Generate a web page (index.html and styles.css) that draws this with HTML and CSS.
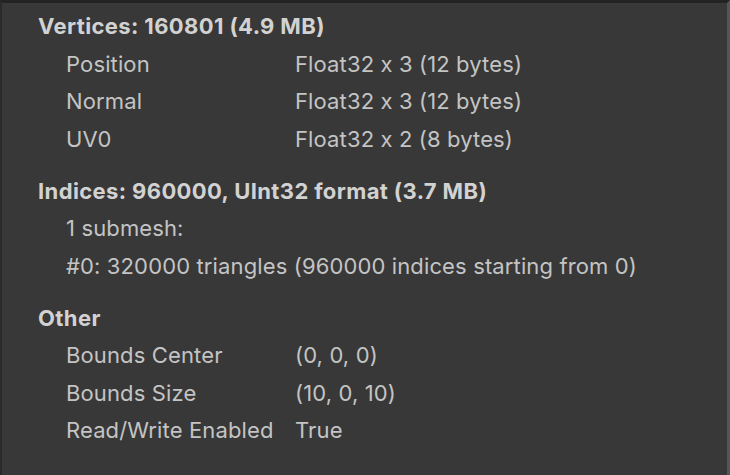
FILE: index.html
```html
<!DOCTYPE html>
<html>
<head>
<meta charset="utf-8">
<link rel="stylesheet" href="styles.css">
</head>
<body>
<div class="panel">
  <section class="section">
    <div class="header">Vertices: 160801 (4.9 MB)</div>
    <div class="grid">
      <div class="label">Position</div><div class="value">Float32 x 3 (12 bytes)</div>
      <div class="label">Normal</div><div class="value">Float32 x 3 (12 bytes)</div>
      <div class="label">UV0</div><div class="value">Float32 x 2 (8 bytes)</div>
    </div>
  </section>
  <section class="section">
    <div class="header">Indices: 960000, UInt32 format (3.7 MB)</div>
    <div class="line">1 submesh:</div>
    <div class="line">#0: 320000 triangles (960000 indices starting from 0)</div>
  </section>
  <section class="section">
    <div class="header">Other</div>
    <div class="grid">
      <div class="label">Bounds Center</div><div class="value">(0, 0, 0)</div>
      <div class="label">Bounds Size</div><div class="value">(10, 0, 10)</div>
      <div class="label">Read/Write Enabled</div><div class="value">True</div>
    </div>
  </section>
</div>
</body>
</html>
```
FILE: styles.css
```css
html, body {
  margin: 0;
  padding: 0;
  background: #383838;
}
body {
  width: 730px;
  height: 475px;
  overflow: hidden;
  font-family: Inter, "Noto Sans", sans-serif;
  font-size: 22px;
  font-feature-settings: "calt" 0;
  color: #c4c4c4;
}
.panel {
  box-sizing: border-box;
  height: 475px;
  width: 730px;
  border-top: 3px solid #232323;
  border-left: 2px solid #2a2a2a;
  border-right: 3px solid #555555;
  padding: 5px 0 0 36px;
  display: flex;
  flex-direction: column;
  gap: 14.5px;
}
.section {
  display: flex;
  flex-direction: column;
}
.header {
  font-weight: 700;
  color: #d2d2d2;
  line-height: 37.5px;
  letter-spacing: 0.38px;
}
.grid {
  display: grid;
  grid-template-columns: 229px 1fr;
  padding-left: 28px;
}
.label, .value, .line {
  line-height: 37.5px;
  white-space: nowrap;
  letter-spacing: 0.13px;
}
.line {
  padding-left: 28px;
}
```
